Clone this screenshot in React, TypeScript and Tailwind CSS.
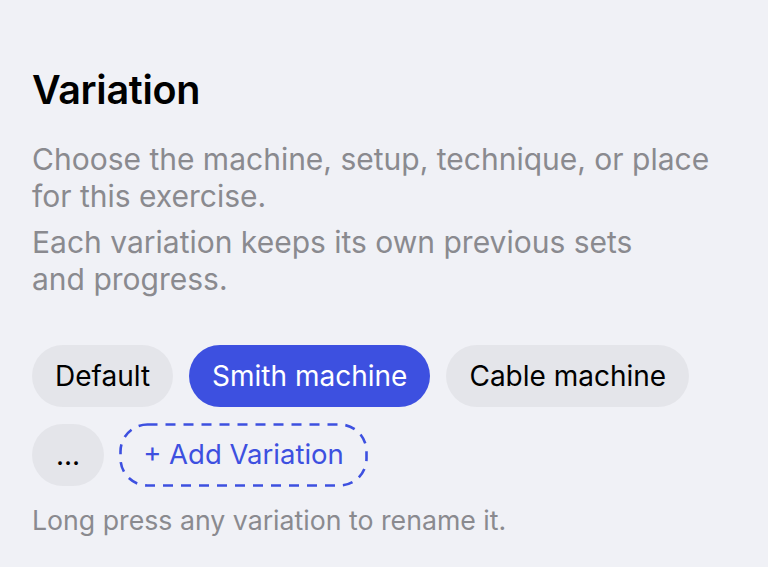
const chips = ["Default", "Smith machine", "Cable machine"];

function Chip({ label, active }: { label: string; active?: boolean }) {
  return (
    <button
      className={
        active
          ? "h-[62px] rounded-full bg-[#3d50e0] px-[23px] text-[28px] text-white"
          : "h-[62px] rounded-full bg-[#e4e5ea] px-[23px] text-[28px] text-black"
      }
    >
      {label}
    </button>
  );
}

export default function App() {
  return (
    <div
      className="min-h-[567px] bg-[#f0f1f6] px-8 pt-[62px]"
      style={{ fontFamily: "Inter, 'Noto Sans', sans-serif" }}
    >
      <h2 className="text-[39.5px] font-semibold leading-[56px] tracking-[-0.3px] text-black">
        Variation
      </h2>
      <div className="mt-[23px] text-[30px] leading-[37px] text-[#8a8a8f]">
        <p>
          Choose the machine, setup, technique, or place
          <br />
          for this exercise.
        </p>
        <p className="mt-[9px]">
          Each variation keeps its own previous sets
          <br />
          and progress.
        </p>
      </div>

      <div className="mt-[47px] flex flex-wrap gap-x-4 gap-y-[17px]">
        {chips.map((c) => (
          <Chip key={c} label={c} active={c === "Smith machine"} />
        ))}
        <button className="h-[62px] w-[72px] rounded-full bg-[#e4e5ea] text-[28px] text-black">
          ...
        </button>
        <button className="relative -ml-[1px] h-[64px] w-[249px] -translate-y-px text-[27.5px] text-[#3d50e0]">
          <svg className="absolute inset-0" width="249" height="64" viewBox="0 0 249 64">
            <rect
              x="1.5"
              y="1.5"
              width="246"
              height="61"
              rx="27"
              fill="none"
              stroke="#3d50e0"
              strokeWidth="2.6"
              strokeDasharray="10 8"
            />
          </svg>
          + Add Variation
        </button>
      </div>

      <p className="mt-[16px] text-[26.7px] leading-[32px] text-[#8a8a8f]">
        Long press any variation to rename it.
      </p>
    </div>
  );
}
